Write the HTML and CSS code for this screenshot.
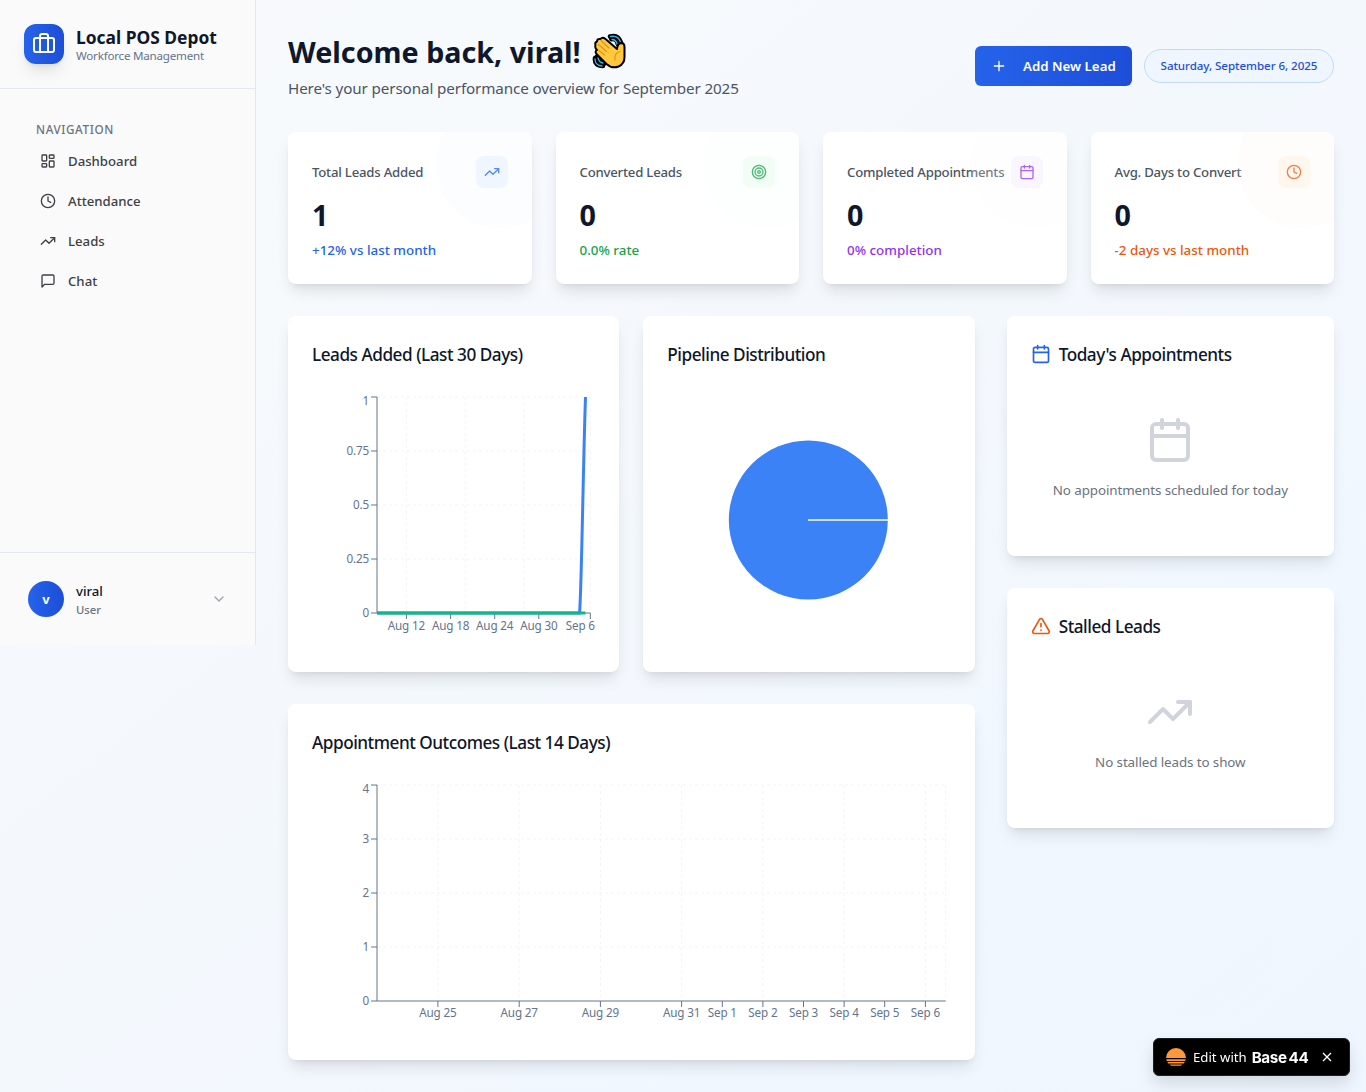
FILE: index.html
```html
<!DOCTYPE html>
<html lang="en">
<head>
<meta charset="utf-8">
<title>Local POS Depot</title>
<link rel="stylesheet" href="styles.css">
</head>
<body>
<svg class="defs" width="0" height="0" aria-hidden="true">
  <symbol id="trend" viewBox="0 0 24 24"><path d="M22 7 13.5 15.5 8.5 10.5 2 17"/><path d="M16 7h6v6"/></symbol>
  <symbol id="calendar" viewBox="0 0 24 24"><path d="M8 2v4M16 2v4M3 10h18"/><rect x="3" y="4" width="18" height="18" rx="2"/></symbol>
  <symbol id="clock" viewBox="0 0 24 24"><circle cx="12" cy="12" r="10"/><path d="M12 6v6l4 2"/></symbol>
</svg>
<div class="app">
  <aside class="sidebar">
    <div class="brand">
      <div class="brand-mark">
        <svg class="icon i24" viewBox="0 0 24 24"><path d="M8 21V5a2 2 0 0 1 2-2h4a2 2 0 0 1 2 2v16"/><rect x="2" y="7" width="20" height="14" rx="2"/></svg>
      </div>
      <div>
        <div class="brand-name">Local POS Depot</div>
        <div class="brand-sub">Workforce Management</div>
      </div>
    </div>
    <nav class="nav">
      <div class="nav-label">NAVIGATION</div>
      <a class="nav-item"><svg class="icon i16" viewBox="0 0 24 24"><rect x="3" y="3" width="7" height="9" rx="1"/><rect x="14" y="3" width="7" height="5" rx="1"/><rect x="14" y="12" width="7" height="9" rx="1"/><rect x="3" y="16" width="7" height="5" rx="1"/></svg><span>Dashboard</span></a>
      <a class="nav-item"><svg class="icon i16"><use href="#clock"/></svg><span>Attendance</span></a>
      <a class="nav-item"><svg class="icon i16"><use href="#trend"/></svg><span>Leads</span></a>
      <a class="nav-item"><svg class="icon i16" viewBox="0 0 24 24"><path d="M21 15a2 2 0 0 1-2 2H7l-4 4V5a2 2 0 0 1 2-2h14a2 2 0 0 1 2 2z"/></svg><span>Chat</span></a>
    </nav>
    <div class="user">
      <div class="avatar">v</div>
      <div class="user-text">
        <div class="user-name">viral</div>
        <div class="user-role">User</div>
      </div>
      <svg class="icon i16 chevron" viewBox="0 0 24 24"><path d="m6 9 6 6 6-6"/></svg>
    </div>
  </aside>

  <main class="main">
    <header class="page-head">
      <div>
        <h1 class="title"><span>Welcome back, viral!</span>
          <svg class="wave" viewBox="0 0 34 36">
            <g fill="none" stroke-linecap="round">
              <path d="M18 3.500Q26 1 29 9.500M3 25Q2 33 11 33" stroke="#000" stroke-width="4.500"/>
              <path d="M19.500 6Q25 5 26 11M5 24Q6 30 12 30.500" stroke="#000" stroke-width="5"/>
              <path d="M18.500 3.500Q26 2 28.500 9M3 26Q3 32.500 10 33" stroke="#36b5e5" stroke-width="1.300"/>
              <path d="M20 6.500Q24 6.500 25 11M6 25Q7 29.500 11 30" stroke="#36b5e5" stroke-width="1.300"/>
            </g>
            <path d="M3.500 12Q2.500 9.500 5 8.500Q5 5.500 8.500 6Q10.500 3.500 13.500 6L25 16Q25.500 10.500 29 10Q32.500 10 32.500 14V24Q32.500 31 26.500 33.500Q20 36 14.500 31L4.500 21Q2.500 18.500 5 17Q2.500 14.500 3.500 12Z" fill="#ffc83d" stroke="#000" stroke-width="2" stroke-linejoin="round"/>
            <path d="M9 7.500 17 15M6.500 11.500 14.500 18.500M7 17.500 12.500 22M28 18.500Q22 20 23 27" fill="none" stroke="#d99620" stroke-width="1.200" stroke-linecap="round"/>
          </svg>
        </h1>
        <p class="subtitle">Here's your personal performance overview for September 2025</p>
      </div>
      <div class="actions">
        <button class="btn"><svg class="icon i16" viewBox="0 0 24 24"><path d="M5 12h14M12 5v14"/></svg><span>Add New Lead</span></button>
        <div class="date">Saturday, September 6, 2025</div>
      </div>
    </header>

    <section class="stats">
      <article class="card stat blue">
        <div class="stat-top"><span class="stat-label">Total Leads Added</span><span class="stat-icon"><svg class="icon i16"><use href="#trend"/></svg></span></div>
        <div class="stat-value">1</div>
        <div class="stat-note">+12% vs last month</div>
      </article>
      <article class="card stat green">
        <div class="stat-top"><span class="stat-label">Converted Leads</span><span class="stat-icon"><svg class="icon i16" viewBox="0 0 24 24"><circle cx="12" cy="12" r="10"/><circle cx="12" cy="12" r="6"/><circle cx="12" cy="12" r="2"/></svg></span></div>
        <div class="stat-value">0</div>
        <div class="stat-note">0.0% rate</div>
      </article>
      <article class="card stat purple">
        <div class="stat-top"><span class="stat-label">Completed Appointments</span><span class="stat-icon"><svg class="icon i16"><use href="#calendar"/></svg></span></div>
        <div class="stat-value">0</div>
        <div class="stat-note">0% completion</div>
      </article>
      <article class="card stat orange">
        <div class="stat-top"><span class="stat-label">Avg. Days to Convert</span><span class="stat-icon"><svg class="icon i16"><use href="#clock"/></svg></span></div>
        <div class="stat-value">0</div>
        <div class="stat-note">-2 days vs last month</div>
      </article>
    </section>

    <div class="content">
      <div class="charts">
        <section class="card panel">
          <h2 class="panel-title"><span>Leads Added (Last 30 Days)</span></h2>
          <svg class="chart" width="283" height="256">
            <g class="grid">
              <path d="M65 5H278M65 59H278M65 113H278M65 167H278M94.400 5V221M153.300 5V221M212.100 5V221M278.300 5V221"/>
            </g>
            <g class="axis">
              <path d="M65 5V221M59 5H65M59 59H65M59 113H65M59 167H65M59 221H65"/>
              <path d="M65 221H278.300M94.400 221v6M138.600 221v6M182.700 221v6M226.800 221v6M278.300 221v6"/>
            </g>
            <g class="tick end">
              <text x="57" y="13">1</text><text x="57" y="63">0.75</text><text x="57" y="117">0.5</text><text x="57" y="171">0.25</text><text x="57" y="225">0</text>
            </g>
            <g class="tick mid">
              <text x="94.400" y="238">Aug 12</text><text x="138.600" y="238">Aug 18</text><text x="182.700" y="238">Aug 24</text><text x="226.800" y="238">Aug 30</text><text x="268.300" y="238">Sep 6</text>
            </g>
            <path class="line blue-line" d="M65 221H267.500C269.500 203 271 77 273.500 5"/>
            <path class="line green-line" d="M65 221H273.500"/>
          </svg>
        </section>
        <section class="card panel">
          <h2 class="panel-title"><span>Pipeline Distribution</span></h2>
          <svg class="chart" width="283" height="256">
            <circle cx="141.300" cy="128" r="79.500" fill="#3b82f6"/>
            <path d="M141 128h80" stroke="#fff" stroke-width="2" opacity=".75"/>
          </svg>
        </section>
        <section class="card panel wide">
          <h2 class="panel-title"><span>Appointment Outcomes (Last 14 Days)</span></h2>
          <svg class="chart" width="638" height="256">
            <g class="grid">
              <path d="M65 5H633.700M65 59H633.700M65 113H633.700M65 167H633.700M125.900 5V221M207.200 5V221M288.400 5V221M369.600 5V221M450.900 5V221M532.100 5V221M613.400 5V221M633.700 5V221"/>
            </g>
            <g class="axis">
              <path d="M65 5V221M59 5H65M59 59H65M59 113H65M59 167H65M59 221H65"/>
              <path d="M65 221H633.700M125.900 221v6M207.200 221v6M288.400 221v6M369.600 221v6M410.300 221v6M450.900 221v6M491.500 221v6M532.100 221v6M572.700 221v6M613.400 221v6"/>
            </g>
            <g class="tick end">
              <text x="57" y="13">4</text><text x="57" y="63">3</text><text x="57" y="117">2</text><text x="57" y="171">1</text><text x="57" y="225">0</text>
            </g>
            <g class="tick mid">
              <text x="125.900" y="237">Aug 25</text><text x="207.200" y="237">Aug 27</text><text x="288.400" y="237">Aug 29</text><text x="369.600" y="237">Aug 31</text><text x="410.300" y="237">Sep 1</text><text x="450.900" y="237">Sep 2</text><text x="491.500" y="237">Sep 3</text><text x="532.100" y="237">Sep 4</text><text x="572.700" y="237">Sep 5</text><text x="613.400" y="237">Sep 6</text>
            </g>
          </svg>
        </section>
      </div>

      <div class="side">
        <section class="card panel">
          <h2 class="panel-title"><svg class="icon i20 c-blue"><use href="#calendar"/></svg><span>Today's Appointments</span></h2>
          <div class="empty"><svg class="icon i48"><use href="#calendar"/></svg><p>No appointments scheduled for today</p></div>
        </section>
        <section class="card panel">
          <h2 class="panel-title"><svg class="icon i20 c-orange" viewBox="0 0 24 24"><path d="m21.730 18-8-14a2 2 0 0 0-3.480 0l-8 14A2 2 0 0 0 4 21h16a2 2 0 0 0 1.730-3M12 9v4M12 17h.010"/></svg><span>Stalled Leads</span></h2>
          <div class="empty"><svg class="icon i48"><use href="#trend"/></svg><p>No stalled leads to show</p></div>
        </section>
      </div>
    </div>
  </main>
</div>

<div class="badge">
  <svg class="sun" viewBox="0 0 20 20"><path d="M0 11a10 10 0 1 1 20 0zM.300 12.200h19.400l-.5 1.800H.8zM1.300 15h17.400l-1 1.600H2.300zM3.500 17.500h13l-1.800 1.200H5.300z" fill="#ff983b"/></svg>
  <span class="badge-text">Edit with</span><span class="badge-logo">Base<span class="badge-num">44</span></span>
  <svg class="close" viewBox="0 0 10 10"><path d="m1 1 8 8M9 1 1 9"/></svg>
</div>
</body>
</html>
```
FILE: styles.css
```css
* { box-sizing: border-box; }
body {
  margin: 0;
  min-height: 1092px;
  font-family: "Noto Sans", "Open Sans", sans-serif;
  color: #0f172a;
  background: linear-gradient(to bottom right, #f8fafc, #eff6ff);
}
h1, h2, p { margin: 0; }
.defs { position: absolute; }
.icon { fill: none; stroke: currentColor; stroke-width: 2; stroke-linecap: round; stroke-linejoin: round; flex: none; display: block; }
.i16 { width: 16px; height: 16px; }
.i20 { width: 20px; height: 20px; }
.i24 { width: 24px; height: 24px; }
.i48 { width: 48px; height: 48px; }
.app { display: flex; align-items: flex-start; }

.sidebar { width: 256px; height: 645px; flex: none; display: flex; flex-direction: column; background: #fafafa; border-right: 1px solid #e2e8f0; }
.brand { display: flex; gap: 12px; padding: 24px; height: 89px; border-bottom: 1px solid #e2e8f0; }
.brand-mark { width: 40px; height: 40px; border-radius: 12px; display: flex; align-items: center; justify-content: center; color: #fff; background: linear-gradient(to right, #2563eb, #1d4ed8); box-shadow: 0 10px 15px -3px rgba(0,0,0,.1), 0 4px 6px -4px rgba(0,0,0,.1); }
.brand-mark .icon { margin-top: -2px; }
.brand-name { font-size: 17.400px; font-weight: 700; line-height: 24px; padding-top: 1px; white-space: nowrap; }
.brand-sub { font-size: 11.600px; letter-spacing: -.22px; line-height: 14px; color: #64748b; white-space: nowrap; }
.nav { flex: 1; padding: 28px 24px 0; }
.nav-label { padding: 0 12px; height: 24px; line-height: 24px; font-size: 11.700px; font-weight: 500; letter-spacing: .6px; color: #6b7280; }
.nav-item { display: flex; align-items: center; gap: 12px; height: 40px; padding: 0 16px; font-size: 13.200px; font-weight: 500; color: #3f3f46; }
.user { display: flex; align-items: center; gap: 12px; height: 93px; padding: 0 28px; border-top: 1px solid #e2e8f0; }
.avatar { width: 36px; height: 36px; border-radius: 50%; background: linear-gradient(to right, #2563eb, #1d4ed8); color: #fff; font-size: 13px; font-weight: 700; display: flex; align-items: center; justify-content: center; }
.user-text { flex: 1; }
.user-name { font-size: 13.200px; font-weight: 500; line-height: 20px; }
.user-role { font-size: 11.300px; font-weight: 500; line-height: 17px; color: #6b7280; }
.chevron { color: #9ca3af; }

.main { flex: 1; padding: 32px; }
.page-head { display: flex; align-items: center; justify-content: space-between; height: 68px; margin-bottom: 32px; }
.title { display: flex; align-items: center; gap: 11px; height: 37px; margin-bottom: 7px; font-size: 28.700px; font-weight: 700; line-height: 37px; }
.title span { padding-top: 1px; }
.wave { width: 34px; height: 36px; margin-top: 1px; }
.subtitle { font-size: 15.200px; letter-spacing: -.11px; line-height: 24px; color: #4b5563; }
.actions { display: flex; align-items: center; gap: 12px; }
.btn { display: flex; align-items: center; gap: 16px; width: 157px; height: 40px; padding: 0 16px; border: 0; border-radius: 6px; color: #fff; font: 600 13.300px "Noto Sans", sans-serif; background: linear-gradient(to right, #2563eb, #1d4ed8); white-space: nowrap; }
.date { width: 190px; height: 34px; border: 1px solid #bfdbfe; border-radius: 17px; background: #eff6ff; color: #1d4ed8; font-size: 11.600px; letter-spacing: -.06px; font-weight: 500; line-height: 32px; text-align: center; white-space: nowrap; }

.card { background: #fff; border-radius: 8px; box-shadow: 0 10px 15px -3px rgba(0,0,0,.1), 0 4px 6px -4px rgba(0,0,0,.1); }
.stats { display: grid; grid-template-columns: repeat(4, 1fr); gap: 24px; margin-bottom: 32px; }
.stat { position: relative; overflow: hidden; height: 152px; padding: 24px; }
.stat::after { content: ""; position: absolute; top: -32px; right: -32px; width: 128px; height: 128px; border-radius: 50%; background: var(--glow); opacity: .25; }
.stat-top { display: flex; align-items: center; justify-content: space-between; height: 32px; white-space: nowrap; }
.stat-label { font-size: 13.200px; letter-spacing: -.22px; font-weight: 500; color: #4b5563; }
.stat-icon { width: 32px; height: 32px; border-radius: 8px; display: flex; align-items: center; justify-content: center; flex: none; background: var(--soft); color: var(--tone); }
.stat-value { margin-top: 9px; font-size: 28.700px; font-weight: 700; line-height: 36px; }
.stat-note { margin-top: 7px; font-size: 13.400px; font-weight: 500; line-height: 20px; color: var(--tone); }
.blue { --soft: #eff6ff; --glow: #f3f8ff; --tone: #2563eb; }
.green { --soft: #f0fdf4; --glow: #f9fefb; --tone: #16a34a; }
.purple { --soft: #faf5ff; --glow: #fdfbff; --tone: #9333ea; }
.orange { --soft: #fff7ed; --glow: #fff8f0; --tone: #ea580c; }

.content { display: grid; grid-template-columns: 686.670px 1fr; gap: 32px; align-items: start; }
.charts { display: grid; grid-template-columns: 1fr 1fr; column-gap: 24px; row-gap: 32px; }
.wide { grid-column: span 2; }
.side { display: grid; gap: 32px; }
.panel { padding: 24px; }
.panel-title { display: flex; align-items: center; gap: 8px; height: 28px; margin-bottom: 24px; font-size: 17.200px; font-weight: 500; line-height: 28px; letter-spacing: -.48px; white-space: nowrap; }
.panel-title span { padding-top: 1px; }
.c-blue { color: #2563eb; }
.c-orange { color: #ea580c; }
.chart { display: block; overflow: visible; }
.grid path { fill: none; stroke: #f1f5f9; stroke-dasharray: 3 3; }
.axis path { fill: none; stroke: #64748b; }
.tick { fill: #64748b; font-size: 11.700px; letter-spacing: -.16px; }
.end { text-anchor: end; }
.mid { text-anchor: middle; }
.line { fill: none; stroke-width: 3; }
.blue-line { stroke: #3b82f6; }
.green-line { stroke: #10b981; }
.empty { display: flex; flex-direction: column; align-items: center; gap: 16px; height: 140px; padding-top: 24px; color: #d1d5db; }
.empty p { font-size: 13.400px; letter-spacing: -.1px; line-height: 20px; color: #6b7280; }

.badge { position: fixed; right: 16px; bottom: 16px; width: 197px; height: 38px; display: flex; align-items: center; padding-left: 12px; border-radius: 6px; border: 1px solid #1c1f24; background: #000; color: #fff; box-shadow: 0 8px 16px rgba(0,0,0,.12); white-space: nowrap; }
.sun { width: 20px; height: 20px; margin-right: 7px; }
.badge-text { font-size: 13.200px; }
.badge-logo { margin-left: 5px; font: 700 15.200px Inter, sans-serif; letter-spacing: -.4px; }
.badge-num { margin-left: 2px; }
.close { width: 10px; height: 10px; margin-left: 14px; fill: none; stroke: #fff; stroke-width: 1.300; }
```
